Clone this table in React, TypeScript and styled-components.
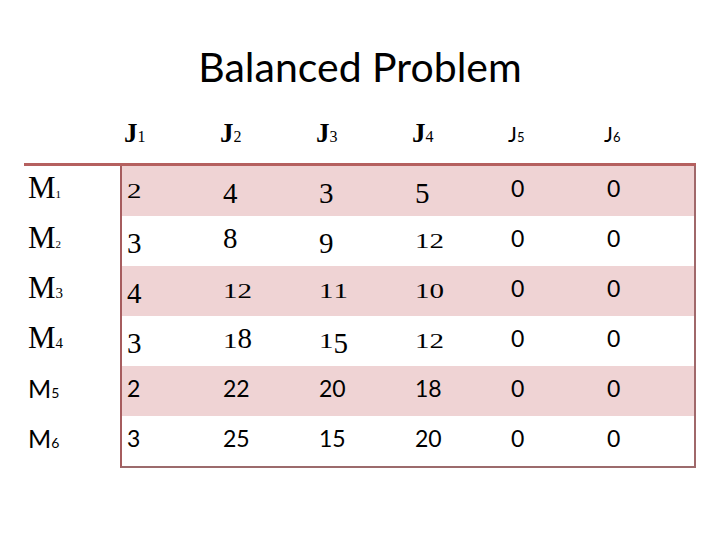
import React from "react";
import styled, { createGlobalStyle } from "styled-components";

const GlobalStyle = createGlobalStyle`
  body {
    margin: 0;
    background: #fff;
  }
`;

const serif = `"Liberation Serif", "DejaVu Serif", serif`;
const sans = `Lato, "Open Sans", sans-serif`;

const Page = styled.div`
  width: 720px;
  height: 540px;
  display: flex;
  flex-direction: column;
  color: #000;
`;

const Title = styled.h1`
  margin: 0;
  height: 86px;
  padding-top: 46px;
  box-sizing: border-box;
  text-align: center;
  font-family: ${sans};
  font-weight: 400;
  font-size: 41px;
  line-height: 1;
`;

const Header = styled.div`
  display: grid;
  grid-template-columns: 98px repeat(5, 96px) 1fr;
  width: 672px;
  margin-left: 24px;
  height: 77px;
  padding-bottom: 16px;
  box-sizing: border-box;
  align-items: end;
`;

const HeadCell = styled.div<{ $sans?: boolean }>`
  padding-left: 2px;
  line-height: 20px;
  font-family: ${(p) => (p.$sans ? sans : serif)};
  font-size: ${(p) => (p.$sans ? "21px" : "27px")};
  font-weight: ${(p) => (p.$sans ? 400 : 700)};
`;

const Sub = styled.span<{ $size: number }>`
  font-size: ${(p) => p.$size}px;
  font-weight: 400;
`;

const Table = styled.div`
  display: flex;
  width: 672px;
  margin-left: 24px;
  border-top: 3px solid #b5605f;
`;

const LabelCol = styled.div`
  width: 96px;
`;

const Label = styled.div<{ $sans?: boolean }>`
  height: 50px;
  line-height: 44px;
  padding-left: 4px;
  font-family: ${(p) => (p.$sans ? sans : serif)};
  font-size: ${(p) => (p.$sans ? "25px" : "31px")};
`;

const DataBox = styled.div`
  width: 576px;
  box-sizing: border-box;
  border-left: 2px solid #a65c5e;
  border-right: 2px solid #a0686a;
  border-bottom: 2px solid #9c6b6c;
`;

const Row = styled.div<{ $shade: boolean }>`
  display: grid;
  grid-template-columns: repeat(5, 96px) 1fr;
  height: 50px;
  background: ${(p) => (p.$shade ? "#efd3d4" : "#fff")};
`;

const Cell = styled.div<{ $sans?: boolean }>`
  padding-left: 5px;
  line-height: 44px;
  font-family: ${(p) => (p.$sans ? sans : serif)};
  font-size: ${(p) => (p.$sans ? "23px" : "29px")};
`;

const SmallDigit = styled.span`
  display: inline-block;
  line-height: 1;
  transform: scaleY(0.72);
  transform-origin: 50% 83.75%;
`;

const LowDigit = styled.span`
  vertical-align: -0.18em;
`;

// old-style figures, like the serif in the slide
const OldStyle = ({ value }: { value: string }) => (
  <>
    {value.split("").map((ch, i) => {
      if ("012".includes(ch)) return <SmallDigit key={i}>{ch}</SmallDigit>;
      if ("34579".includes(ch)) return <LowDigit key={i}>{ch}</LowDigit>;
      return <span key={i}>{ch}</span>;
    })}
  </>
);

const rows = [
  ["2", "4", "3", "5", "0", "0"],
  ["3", "8", "9", "12", "0", "0"],
  ["4", "12", "11", "10", "0", "0"],
  ["3", "18", "15", "12", "0", "0"],
  ["2", "22", "20", "18", "0", "0"],
  ["3", "25", "15", "20", "0", "0"],
];

const subSizes = [11, 11, 15, 15, 14, 14];

export default function App() {
  return (
    <>
      <GlobalStyle />
      <Page>
        <Title>Balanced Problem</Title>
        <Header>
          <div />
          {[1, 2, 3, 4, 5, 6].map((n) => (
            <HeadCell key={n} $sans={n > 4}>
              J<Sub $size={n > 4 ? 13 : 16}>{n}</Sub>
            </HeadCell>
          ))}
        </Header>
        <Table>
          <LabelCol>
            {rows.map((_, i) => (
              <Label key={i} $sans={i > 3}>
                M<Sub $size={subSizes[i]}>{i + 1}</Sub>
              </Label>
            ))}
          </LabelCol>
          <DataBox>
            {rows.map((row, i) => (
              <Row key={i} $shade={i % 2 === 0}>
                {row.map((v, j) => {
                  const useSans = i > 3 || j > 3;
                  return (
                    <Cell key={j} $sans={useSans}>
                      {useSans ? v : <OldStyle value={v} />}
                    </Cell>
                  );
                })}
              </Row>
            ))}
          </DataBox>
        </Table>
      </Page>
    </>
  );
}
